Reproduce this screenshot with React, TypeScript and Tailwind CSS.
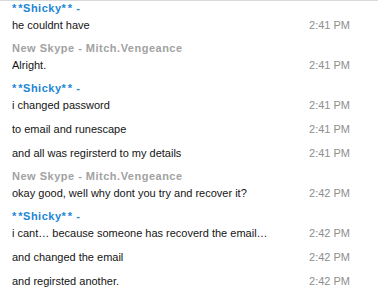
import React from "react";

type Msg = { text: string; time: string };
type Group = { name: string; me: boolean; msgs: Msg[] };

const groups: Group[] = [
  { name: "Shicky", me: true, msgs: [{ text: "he couldnt have", time: "2:41 PM" }] },
  { name: "New Skype - Mitch.Vengeance", me: false, msgs: [{ text: "Alright.", time: "2:41 PM" }] },
  {
    name: "Shicky",
    me: true,
    msgs: [
      { text: "i changed password", time: "2:41 PM" },
      { text: "to email and runescape", time: "2:41 PM" },
      { text: "and all was regirsterd to my details", time: "2:41 PM" },
    ],
  },
  {
    name: "New Skype - Mitch.Vengeance",
    me: false,
    msgs: [{ text: "okay good, well why dont you try and recover it?", time: "2:42 PM" }],
  },
  {
    name: "Shicky",
    me: true,
    msgs: [
      { text: "i cant\u2026 because someone has recoverd the email\u2026", time: "2:42 PM" },
      { text: "and changed the email", time: "2:42 PM" },
      { text: "and regirsted another.", time: "2:42 PM" },
    ],
  },
];

function Name({ g }: { g: Group }) {
  if (!g.me) {
    return (
      <div className="h-[17px] leading-4 font-bold tracking-[0.5px] text-[#a2a2a2]">{g.name}</div>
    );
  }
  return (
    <div className="h-[17px] leading-4 font-bold tracking-[0.5px] text-[#1d86d6] whitespace-pre">
      <span className="tracking-[2px]">*</span>*{g.name}
      <span className="tracking-[2px]">*</span>* -
    </div>
  );
}

export default function App() {
  return (
    <div
      className="w-[378px] h-[298px] overflow-hidden bg-white border-t border-[#d9d9d9] text-[11px]"
      style={{ fontFamily: "Tahoma, 'Liberation Sans', Arial, sans-serif" }}
    >
      <div className="flex flex-col pl-3 pr-[28px] -mt-px">
        {groups.map((g, gi) => (
          <div key={gi} className={`flex flex-col ${gi > 0 ? "-mt-px" : ""}`}>
            <Name g={g} />
            {g.msgs.map((m, mi) => (
              <div key={mi} className="flex items-start h-6 leading-4">
                <div className="flex-1 text-[#141414] whitespace-nowrap">{m.text}</div>
                <div className="w-[60px] text-right text-[#8e8e8e]">{m.time}</div>
              </div>
            ))}
          </div>
        ))}
      </div>
    </div>
  );
}
